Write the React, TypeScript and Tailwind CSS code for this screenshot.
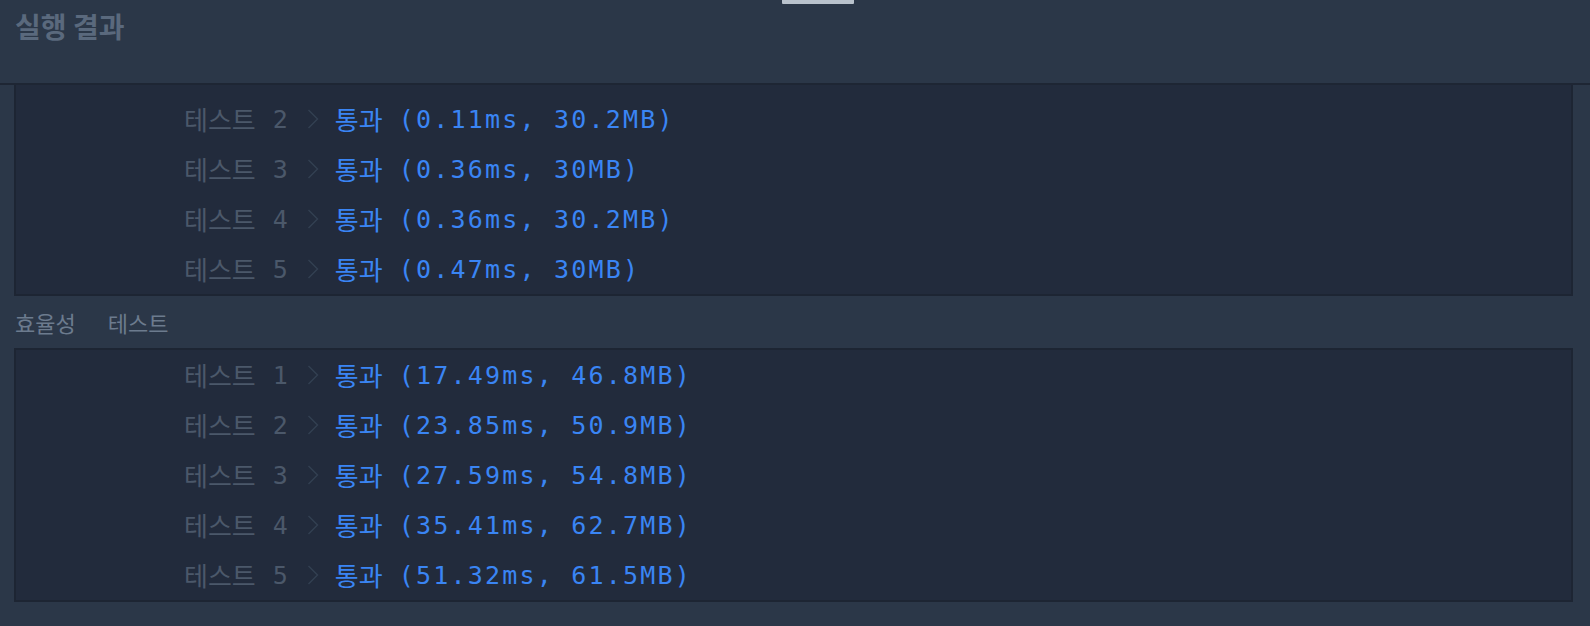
import React from 'react';

const KR = "font-['Noto_Sans_CJK_KR','Noto_Sans',sans-serif]";
const MONO = "font-['DejaVu_Sans_Mono','Liberation_Mono',monospace]";

type Row = { n: number; time: string; mem: string };

const accuracy: Row[] = [
  { n: 1, time: '0.09ms', mem: '30.1MB' },
  { n: 2, time: '0.11ms', mem: '30.2MB' },
  { n: 3, time: '0.36ms', mem: '30MB' },
  { n: 4, time: '0.36ms', mem: '30.2MB' },
  { n: 5, time: '0.47ms', mem: '30MB' },
];

const efficiency: Row[] = [
  { n: 1, time: '17.49ms', mem: '46.8MB' },
  { n: 2, time: '23.85ms', mem: '50.9MB' },
  { n: 3, time: '27.59ms', mem: '54.8MB' },
  { n: 4, time: '35.41ms', mem: '62.7MB' },
  { n: 5, time: '51.32ms', mem: '61.5MB' },
];

const Chevron: React.FC = () => (
  <svg width="12" height="20" viewBox="0 0 12 20" className="ml-[19px] shrink-0">
    <path d="M1.5 1 L10.5 10 L1.5 19" fill="none" stroke="#334052" strokeWidth="1.4" />
  </svg>
);

const ResultRow: React.FC<{ row: Row }> = ({ row }) => (
  <div className="flex items-center h-[50px] pl-[168px] whitespace-pre">
    <span className={`${KR} text-[26px] text-[#4b586a] leading-none`}>테스트</span>
    <span className={`${MONO} text-[25px] text-[#4b586a] leading-none ml-[17px]`}>{row.n}</span>
    <Chevron />
    <span className={`${KR} text-[26px] text-[#3a85f4] leading-none ml-[16px]`}>통과</span>
    <span className={`${MONO} text-[25px] tracking-[2.2px] text-[#3a85f4] leading-none ml-[16px]`}>
      ({row.time}, {row.mem})
    </span>
  </div>
);

export default function App() {
  return (
    <div className="relative w-[1590px] h-[626px] overflow-hidden bg-[#2b3748]">
      {/* drag handle */}
      <div className="absolute left-[782px] top-0 w-[72px] h-[4px] rounded-b-[1px] bg-[#b9c2cc]" />

      {/* header */}
      <div className="h-[85px] border-b-2 border-[#1e2634] pl-[15px] pt-[8px]">
        <h2 className={`${KR} text-[28px] font-bold text-[#5a697d] leading-[36px]`}>실행 결과</h2>
      </div>

      <div className="pl-[14px] pr-[17px]">
        {/* accuracy panel (scrolled) */}
        <div className="h-[211px] border-2 border-t-0 border-[#1d2533] bg-[#222b3c] overflow-hidden">
          <div className="mt-[-41px]">
            {accuracy.map((r) => (
              <ResultRow key={r.n} row={r} />
            ))}
          </div>
        </div>

        <div className={`${KR} flex items-center gap-[32px] h-[52px] pl-[1px] text-[22px] text-[#6c7b8e]`}>
          <span>효율성</span>
          <span>테스트</span>
        </div>

        <div className="h-[254px] border-2 border-[#1d2533] bg-[#222b3c] overflow-hidden">
          {efficiency.map((r) => (
            <ResultRow key={r.n} row={r} />
          ))}
        </div>
      </div>
    </div>
  );
}
